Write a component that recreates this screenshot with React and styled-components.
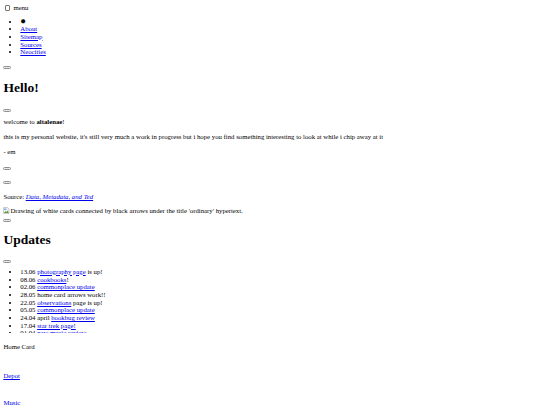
import React from "react";
import styled, { createGlobalStyle } from "styled-components";

// the page is a 1280px-wide default-styled page photographed down to 540px,
// so every browser default below is taken at 0.42 of its usual size
const Global = createGlobalStyle`
    body {
        margin: 4px 3.4px;
        font-family: "Liberation Serif", "Times New Roman", serif;
        font-size: 6.75px;
        line-height: 7.7px;
        color: #000;
        background: #fff;
    }
    a {
        color: #0000ee;
    }
    ul {
        margin: 0;
        padding-left: 16.9px;
    }
`

const MenuLabel = styled.label`
    display: flex;
    align-items: center;
    gap: 3px;
    height: 8px;
`

const Check = styled.input`
    appearance: none;
    width: 5.5px;
    height: 5.5px;
    margin: 0 0 0 1.6px;
    border: 0.8px solid #767676;
    border-radius: 1px;
    background: #fff;
`

const Nav = styled.ul`
    margin-top: 5.5px;
`

const Dot = styled.span`
    font-size: 9.5px;
`

const BtnRow = styled.div`
    height: 7.7px;
    margin-top: ${p => p.$top}px;
    display: flex;
    align-items: center;
`

const Bare = styled.button`
    width: 7.5px;
    height: 3px;
    padding: 0;
    border: 0.8px solid #8f8f8f;
    border-radius: 1.5px;
    background: #e9e9e9;
`

const Title = styled.h1`
    font-size: 13.5px;
    line-height: 15.5px;
    margin: ${p => p.$top}px 0 0;
`

const Para = styled.p`
    margin: ${p => p.$top}px 0 0;
`

const Broken = styled.div`
    margin-top: 6.3px;
    display: flex;
    align-items: center;
    gap: 0.5px;
`

const Updates = styled.ul`
    margin-top: 2px;
    height: 65.5px;
    overflow: hidden;
`

const Card = styled.div`
    margin-top: ${p => p.$top}px;
`

const CardLink = styled.a`
    display: block;
    margin-top: ${p => p.$top}px;
`

const BrokenIcon = () => (
    <svg width="6.5" height="7" viewBox="0 0 13 14">
        <path d="M1 1h8l3 3v9H1z" fill="#f4f4f4" stroke="#9a9a9a" />
        <path d="M2 12l3-4 2 2 2-3 2 3v2H2z" fill="#5c9d3e" />
        <path d="M2 3h5v3H2z" fill="#7fb2e5" />
    </svg>
)

const updates = [
    ["13.06", "", "photography page", " is up!"],
    ["08.06", "", "cookbooks", "!"],
    ["02.06", "", "commonplace update", ""],
    ["28.05", "home card arrows work!!", null, ""],
    ["22.05", "", "observations", " page is up!"],
    ["05.05", "", "commonplace update", ""],
    ["24.04", "april ", "bookbug review", ""],
    ["17.04", "", "star trek page!", ""],
    ["01.04", "", "new music review", ""],
]

export default function App() {
    return (
        <>
            <Global />
            <MenuLabel>
                <Check type="checkbox" />
                <span>menu</span>
            </MenuLabel>
            <Nav>
                <li><Dot>●</Dot></li>
                <li><a href="#">About</a></li>
                <li><a href="#">Sitemap</a></li>
                <li><a href="#">Sources</a></li>
                <li><a href="#">Neocities</a></li>
            </Nav>
            <BtnRow $top={7.6}><Bare /></BtnRow>
            <Title $top={8.6}>Hello!</Title>
            <BtnRow $top={11}><Bare /></BtnRow>
            <Para $top={4.3}>welcome to <b>altalenae</b>!</Para>
            <Para $top={7}>this is my personal website, it's still very much a work in progress but i hope you find something interesting to look at while i chip away at it</Para>
            <Para $top={6.8}>- em</Para>
            <BtnRow $top={9.2}><Bare /></BtnRow>
            <BtnRow $top={6.8}><Bare /></BtnRow>
            <Para $top={6.5}>Source: <i><a href="#">Data, Metadata, and Ted</a></i></Para>
            <Broken>
                <BrokenIcon />
                <span>Drawing of white cards connected by black arrows under the title 'ordinary' hypertext.</span>
            </Broken>
            <BtnRow $top={1.8}><Bare /></BtnRow>
            <Title $top={7.8}>Updates</Title>
            <BtnRow $top={10.5}><Bare /></BtnRow>
            <Updates>
                {updates.map(([date, text, link, after]) => (
                    <li key={date}>
                        {date} {text}
                        {link && <a href="#">{link}</a>}
                        {after}
                    </li>
                ))}
            </Updates>
            <Card $top={9.5}>Home Card</Card>
            <CardLink href="#" $top={21.5}>Depot</CardLink>
            <CardLink href="#" $top={19.5}>Music</CardLink>
        </>
    );
}
